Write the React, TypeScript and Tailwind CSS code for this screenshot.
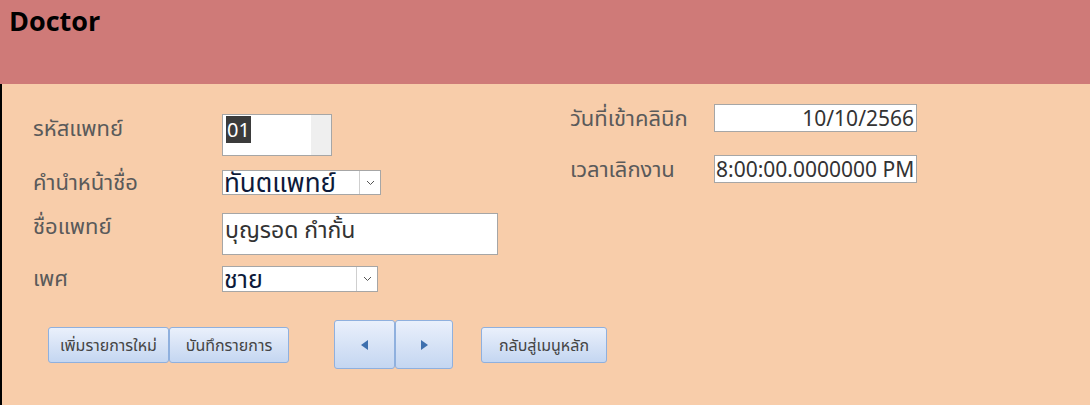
import React from "react";

const F = { fontFamily: '"Noto Sans", "Noto Sans Thai", "Leelawadee UI", Tahoma, sans-serif' };

function Chevron() {
  return (
    <svg width="9" height="6" viewBox="0 0 9 6" fill="none">
      <path d="M1 1 L4.5 4.5 L8 1" stroke="#555" strokeWidth="1" />
    </svg>
  );
}

function Btn({ children, w }: { children: React.ReactNode; w: string }) {
  return (
    <button
      className={`h-[36px] ${w} rounded-[3px] border border-[#8fb0de] bg-gradient-to-b from-[#eaf0fb] to-[#c4d6f1] text-[16px] leading-[20px] text-[#444] flex items-center justify-center whitespace-nowrap`}
    >
      {children}
    </button>
  );
}

export default function App() {
  return (
    <div className="w-[1090px] h-[405px] flex flex-col overflow-hidden" style={F}>
      <div className="h-[84px] bg-[#cf7a78] px-[9px] pt-[3px]">
        <h1 className="text-[27px] font-bold text-black leading-[36px]" style={{ fontFamily: '"Open Sans", "Noto Sans", sans-serif' }}>
          Doctor
        </h1>
      </div>
      <div className="flex-1 bg-[#f8cdaa] border-l-2 border-black relative">
        <div className="flex">
          {/* Left column */}
          <div className="w-[536px] pl-[31px] flex flex-col">
            <div className="mt-[30px] flex items-start">
              <div className="w-[189px] -mt-[1px] text-[22px] leading-[28px] text-[#5a5a5a]">รหัสแพทย์</div>
              <div className="w-[110px] h-[42px] border border-[#a6a6a6] bg-white flex">
                <div className="flex-1 pl-[3px] pt-[1px]">
                  <span className="bg-[#3b3b3b] text-white text-[20px] leading-[27px] inline-block px-[1px]">01</span>
                </div>
                <div className="w-[20px] bg-[#efefef]" />
              </div>
            </div>
            <div className="mt-[14px] flex items-center h-[25px]">
              <div className="w-[189px] -mt-[4px] text-[22px] leading-[28px] text-[#5a5a5a]">คำนำหน้าชื่อ</div>
              <div className="w-[159px] h-[25px] border border-[#a6a6a6] bg-white flex">
                <div className="flex-1 text-[26px] leading-[22px] text-[#0d1a3a] pl-[1px] whitespace-nowrap">ทันตแพทย์</div>
                <div className="w-[21px] border-l border-[#cfcfcf] bg-white flex items-center justify-center">
                  <Chevron />
                </div>
              </div>
            </div>
            <div className="mt-[18px] flex items-start">
              <div className="w-[189px] text-[22px] text-[#5a5a5a] leading-[28px] -mt-[2px]">ชื่อแพทย์</div>
              <div className="w-[276px] h-[42px] border border-[#a6a6a6] bg-white pl-[2px] text-[23px] leading-[30px] text-[#333] whitespace-nowrap">
                บุญรอด กำกั้น
              </div>
            </div>
            <div className="mt-[11px] flex items-center h-[26px]">
              <div className="w-[189px] -mt-[4px] text-[22px] leading-[28px] text-[#5a5a5a]">เพศ</div>
              <div className="w-[156px] h-[26px] border border-[#a6a6a6] bg-white flex">
                <div className="flex-1 text-[25px] leading-[23px] text-[#0d1a3a] pl-[1px] whitespace-nowrap">ชาย</div>
                <div className="w-[21px] border-l border-[#cfcfcf] bg-white flex items-center justify-center">
                  <Chevron />
                </div>
              </div>
            </div>
          </div>
          {/* Right column */}
          <div className="pl-[32px] flex flex-col">
            <div className="mt-[20px] flex items-center h-[28px]">
              <div className="w-[144px] text-[22px] leading-[28px] -mt-[2px] text-[#5a5a5a] whitespace-nowrap">วันที่เข้าคลินิก</div>
              <div className="w-[203px] h-[28px] border border-[#a6a6a6] bg-white text-right pr-[2px] text-[21px] leading-[26px] text-[#333]">
                10/10/2566
              </div>
            </div>
            <div className="mt-[23px] flex items-center h-[28px]">
              <div className="w-[144px] text-[22px] leading-[28px] -mt-[2px] text-[#5a5a5a]">เวลาเลิกงาน</div>
              <div className="w-[203px] h-[28px] border border-[#a6a6a6] bg-white pl-[1px] text-[21px] leading-[26px] text-[#333] whitespace-nowrap overflow-hidden">
                8:00:00.0000000 PM
              </div>
            </div>
          </div>
        </div>
        {/* Buttons */}
        <div className="mt-[28px] pl-[46px] flex items-center">
          <Btn w="w-[121px]">เพิ่มรายการใหม่</Btn>
          <Btn w="w-[120px]">บันทึกรายการ</Btn>
          <div className="ml-[45px] flex">
            <button className="w-[61px] h-[49px] rounded-[3px] border border-[#8fb0de] bg-gradient-to-b from-[#eaf0fb] to-[#c4d6f1] flex items-center justify-center">
              <svg width="8" height="10" viewBox="0 0 8 10"><path d="M7 0 L0 5 L7 10 Z" fill="#3d6fae" /></svg>
            </button>
            <button className="w-[58px] h-[49px] rounded-[3px] border border-[#8fb0de] bg-gradient-to-b from-[#eaf0fb] to-[#c4d6f1] flex items-center justify-center">
              <svg width="8" height="10" viewBox="0 0 8 10"><path d="M1 0 L8 5 L1 10 Z" fill="#3d6fae" /></svg>
            </button>
          </div>
          <div className="ml-[28px]">
            <Btn w="w-[126px]">กลับสู่เมนูหลัก</Btn>
          </div>
        </div>
      </div>
    </div>
  );
}
